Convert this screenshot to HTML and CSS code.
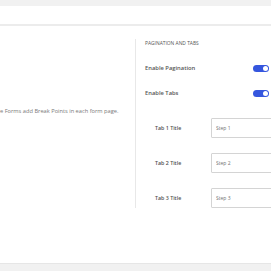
FILE: index.html
```html
<!DOCTYPE html>
<html>
<head>
<meta charset="UTF-8">
<title>Form Settings</title>
<link rel="stylesheet" href="styles.css">
</head>
<body>
	<div class="page">
		<div class="topbar"></div>
		<div class="main">
			<div class="left">
				<p class="hint">e Forms add Break Points in each form page.</p>
			</div>
			<div class="right">
				<h4 class="heading">PAGINATION AND TABS</h4>
				<div class="row first">
					<span class="label">Enable Pagination</span>
					<span class="toggle"></span>
				</div>
				<div class="row">
					<span class="label">Enable Tabs</span>
					<span class="toggle"></span>
				</div>
				<div class="tab-row first">
					<span class="tab-label">Tab 1 Title</span>
					<input class="tab-input" type="text" value="Step 1">
				</div>
				<div class="tab-row">
					<span class="tab-label">Tab 2 Title</span>
					<input class="tab-input" type="text" value="Step 2">
				</div>
				<div class="tab-row">
					<span class="tab-label">Tab 3 Title</span>
					<input class="tab-input" type="text" value="Step 3">
				</div>
			</div>
		</div>
		<div class="footer"></div>
	</div>
</body>
</html>
```
FILE: styles.css
```css
body {
	margin: 0;
	font-family: "Open Sans", "Liberation Sans", sans-serif;
	background: #fff;
	overflow: hidden;
}

.page {
	display: flex;
	flex-direction: column;
	height: 271px;
	overflow: hidden;
}

.topbar {
	height: 18px;
	border-top: 6px solid #f1f1f1;
	border-bottom: 2px solid #ececec;
	background: #fff;
}

.main {
	flex: 1;
	display: flex;
	padding-top: 13px;
}

.left {
	flex: 0 0 135px;
	padding-top: 69px;
}

.hint {
	margin: 0;
	font-size: 5.7px;
	line-height: 6px;
	color: #7a7a7a;
	white-space: nowrap;
}

.right {
	flex: 1;
	min-width: 0;
	align-self: flex-start;
	display: flex;
	flex-direction: column;
	border-left: 1px solid #e8e8e8;
	padding-left: 9px;
}

.heading {
	margin: 0;
	font-size: 4.9px;
	line-height: 8px;
	font-weight: 400;
	color: #555;
}

.row {
	display: flex;
	align-items: center;
	justify-content: space-between;
	height: 12px;
	margin-top: 13px;
	padding-right: 2px;
}

.row.first {
	margin-top: 15px;
}

.label {
	font-size: 5.8px;
	font-weight: 600;
	color: #555;
}

.toggle {
	width: 16px;
	height: 7px;
	border-radius: 4px;
	background: #3556de;
	position: relative;
}

.toggle::after {
	content: "";
	position: absolute;
	right: 1px;
	top: 1px;
	width: 5px;
	height: 5px;
	border-radius: 50%;
	background: #fff;
}

.tab-row {
	display: flex;
	align-items: center;
	margin-top: 15px;
	padding-left: 10px;
}

.tab-row.first {
	margin-top: 19px;
}

.tab-label {
	flex: 0 0 56px;
	font-size: 5.3px;
	font-weight: 600;
	color: #505050;
}

.tab-input {
	flex: 0 0 80px;
	box-sizing: border-box;
	width: 80px;
	height: 20px;
	margin: 0;
	padding: 0 4px;
	border: 1px solid #d4d4d4;
	border-radius: 1px;
	font-family: "Open Sans", "Liberation Sans", sans-serif;
	font-size: 5px;
	color: #707070;
	background: #fff;
	outline: none;
}

.footer {
	height: 7px;
	border-top: 1px solid #e6e6e6;
	background: #f1f1f1;
}
```
